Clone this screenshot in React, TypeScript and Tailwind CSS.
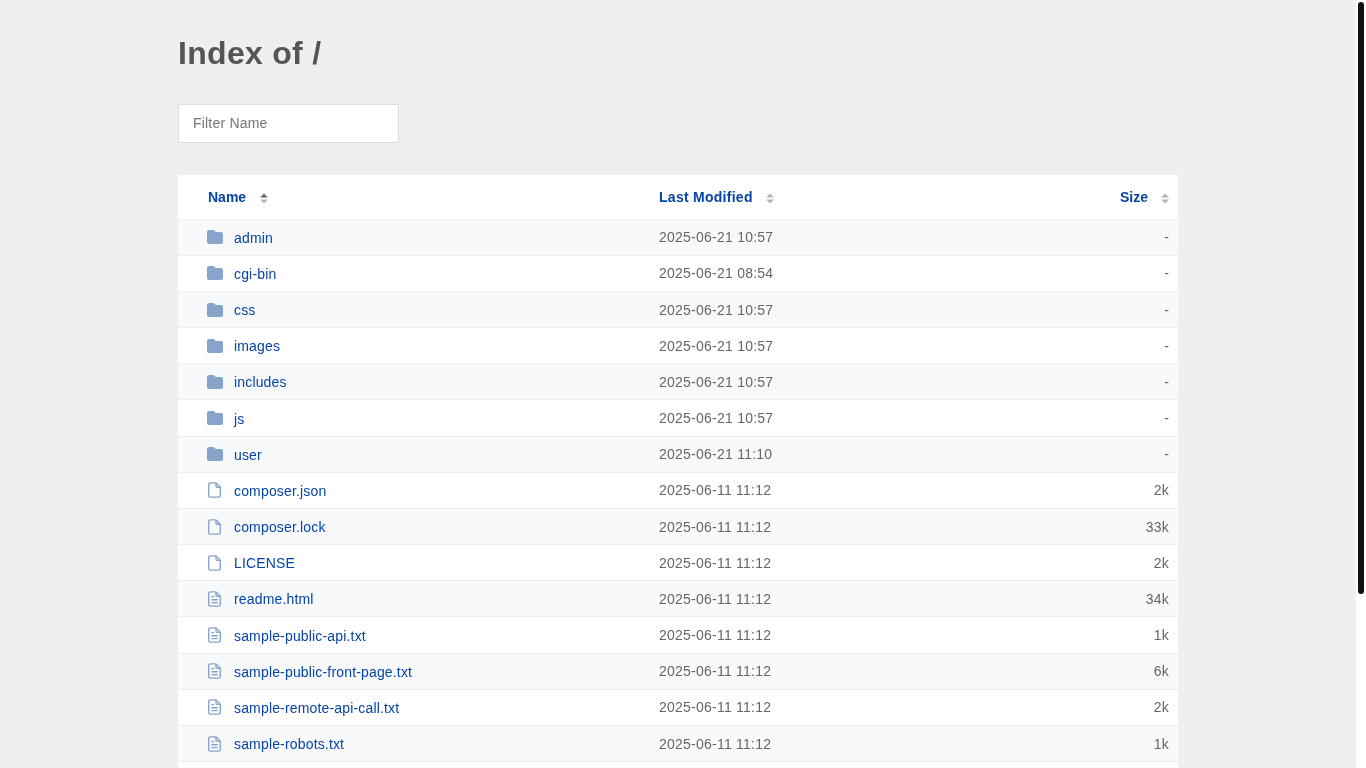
import { FaFolder } from "react-icons/fa6";

type Kind = "d" | "f" | "t";
const rows: [string, string, string, Kind][] = [
  ["admin", "2025-06-21 10:57", "-", "d"],
  ["cgi-bin", "2025-06-21 08:54", "-", "d"],
  ["css", "2025-06-21 10:57", "-", "d"],
  ["images", "2025-06-21 10:57", "-", "d"],
  ["includes", "2025-06-21 10:57", "-", "d"],
  ["js", "2025-06-21 10:57", "-", "d"],
  ["user", "2025-06-21 11:10", "-", "d"],
  ["composer.json", "2025-06-11 11:12", "2k", "f"],
  ["composer.lock", "2025-06-11 11:12", "33k", "f"],
  ["LICENSE", "2025-06-11 11:12", "2k", "f"],
  ["readme.html", "2025-06-11 11:12", "34k", "t"],
  ["sample-public-api.txt", "2025-06-11 11:12", "1k", "t"],
  ["sample-public-front-page.txt", "2025-06-11 11:12", "6k", "t"],
  ["sample-remote-api-call.txt", "2025-06-11 11:12", "2k", "t"],
  ["sample-robots.txt", "2025-06-11 11:12", "1k", "t"],
  ["sample-sitemap.txt", "2025-06-11 11:12", "1k", "t"],
  ["sample-widget.txt", "2025-06-11 11:12", "1k", "t"],
  ["index.php", "2025-06-11 11:12", "1k", "f"],
  ["robots.txt", "2025-06-11 11:12", "1k", "t"],
  ["sitemap.xml", "2025-06-11 11:12", "2k", "f"],
];

function Sort({ active }: { active?: boolean }) {
  return (
    <svg width="8" height="11" viewBox="0 0 8 11" className="block">
      <path d="M4 0.5 L8 4.5 H0 Z" fill={active ? "#666666" : "#b5b5b5"} />
      <path d="M4 10.5 L8 6.5 H0 Z" fill="#b5b5b5" />
    </svg>
  );
}

function Doc({ lines }: { lines?: boolean }) {
  return (
    <svg width="13" height="16" viewBox="0 0 13 16" fill="none" stroke="#88a4cb" strokeWidth="1.4" className="block">
      <path d="M2.5 0.9 H8 L12.3 5.2 V13.4 a1.7 1.7 0 0 1 -1.7 1.7 H2.4 a1.7 1.7 0 0 1 -1.7 -1.7 V2.6 a1.7 1.7 0 0 1 1.8 -1.7 Z" />
      <path d="M8 0.9 V4.2 a1 1 0 0 0 1 1 H12.3" />
      {lines && <path d="M3.3 5.6 H6.3 M3.3 8.7 H9.8 M3.3 11.6 H9.8" />}
    </svg>
  );
}

function Icon({ kind }: { kind: Kind }) {
  if (kind === "d") return <span className="block pl-[1px]"><FaFolder className="text-[16px] text-[#88a4cb]" /></span>;
  return <span className="block pl-[2px]"><Doc lines={kind === "t"} /></span>;
}

export default function App() {
  return (
    <div className="flex h-screen bg-[#eeeff1] font-['Liberation_Sans',Arial,sans-serif] tracking-[0.2px]">
      <div className="min-w-0 flex-1 overflow-hidden">
        <div className="mx-auto w-[1000px] pt-[35px] pb-[48px] will-change-transform">
          <h1 className="text-[32px] leading-[37px] font-bold tracking-[0.3px] text-[#555555]">Index of /</h1>
          <input
            type="text"
            placeholder="Filter Name"
            className="mt-[32px] block h-[39px] w-[221px] border border-[#dddddd] bg-white px-[14px] pb-[2px] text-[14px] text-[#555555] outline-none placeholder:text-[#757575]"
          />
          <div className="mt-[32px] bg-white text-[14px]">
            <div className="grid h-[44.6px] grid-cols-[451px_1fr_200px] items-center border-b border-[#eeeeee] pt-[1px] font-bold tracking-[0.27px] text-[#0645a8]">
              <div className="flex items-center pl-[30px]">
                <a href="#" className="tracking-[0px]">Name</a>
                <span className="ml-[14px] mt-[3px]"><Sort active /></span>
              </div>
              <div className="flex items-center pl-[30px]">
                <a href="#">Last Modified</a>
                <span className="ml-[13px] mt-[3px]"><Sort /></span>
              </div>
              <div className="flex items-center justify-end pr-[9px]">
                <a href="#" className="tracking-[0px]">Size</a>
                <span className="ml-[13px] mt-[3px]"><Sort /></span>
              </div>
            </div>
            {rows.map(([name, date, size, kind], i) => (
              <div
                key={name}
                className={`grid h-[36.175px] grid-cols-[451px_1fr_200px] items-center border-b border-[#eeeeee] ${i % 2 === 0 ? "bg-[#f8f9fb]" : "bg-white"}`}
              >
                <div className="flex items-center pl-[28px] pt-[2.1px]">
                  <span className="flex w-[28px] shrink-0 items-center pb-[2px]"><Icon kind={kind} /></span>
                  <a href="#" className="tracking-[0.165px] text-[#0645a8]">{name}</a>
                </div>
                <div className="pl-[30px] pt-[1.1px] tracking-[0.24px] text-[#666666]">{date}</div>
                <div className="pr-[9px] pt-[1.1px] text-right text-[#666666]">{size}</div>
              </div>
            ))}
          </div>
        </div>
      </div>
      <div className="h-screen w-[10px] shrink-0 bg-white px-[2px] pt-[2px]">
        <div className="h-[592px] w-[6px] rounded-[3px] bg-[#111111]" />
      </div>
    </div>
  );
}
